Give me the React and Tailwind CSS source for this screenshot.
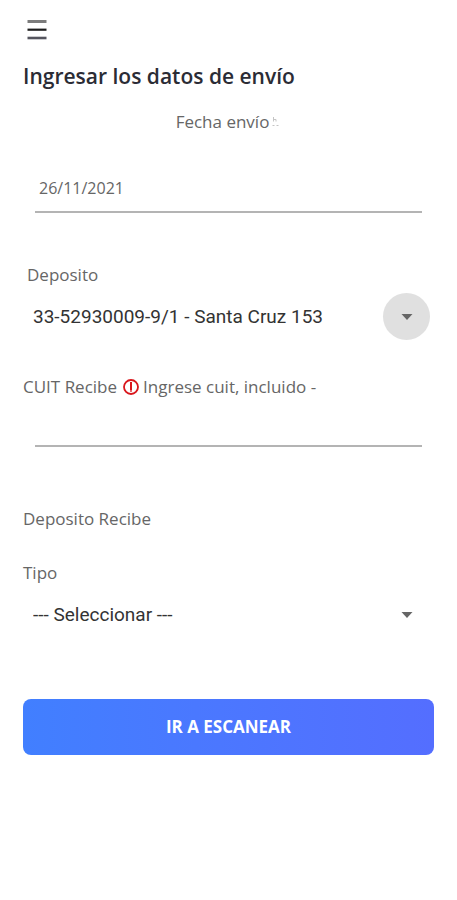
import { useState } from "react";

function Flecha() {
  return (
    <svg viewBox="0 0 12 6" className="h-[6px] w-[12px] fill-[#666666]" aria-hidden="true">
      <path d="M0.5 0h11L6 6z" />
    </svg>
  );
}

function Selector({ id, value, onChange, opciones, activo }) {
  return (
    <div className="relative mt-1.5 h-12">
      <select
        id={id}
        name={id}
        value={value}
        onChange={onChange}
        className="h-full w-full appearance-none bg-transparent pl-2.5 pr-14 font-[Roboto,sans-serif] text-[19px] text-[#333333] focus:outline-none"
      >
        {opciones.map((opcion) => (
          <option key={opcion} value={opcion}>
            {opcion}
          </option>
        ))}
      </select>
      <span
        className={
          activo
            ? "pointer-events-none absolute right-1 top-0 flex size-[47px] items-center justify-center rounded-full bg-[#e0e0e0]"
            : "pointer-events-none absolute right-1 top-0 flex size-[47px] items-center justify-center rounded-full"
        }
      >
        <Flecha />
      </span>
    </div>
  );
}

export default function IngresarEnvio() {
  const [formData, setFormData] = useState({
    fecha_envio: "26/11/2021",
    deposito: "33-52930009-9/1 - Santa Cruz 153",
    cuit_recibe: "",
    tipo: "--- Seleccionar ---",
  });

  const handleChange = (e) => {
    setFormData({ ...formData, [e.target.name]: e.target.value });
  };

  const handleSubmit = (e) => {
    e.preventDefault();
  };

  return (
    <div className="min-h-screen bg-white px-[23px] pt-4 font-['Open_Sans',sans-serif] text-[17px] text-[#666666]">
      <button type="button" aria-label="Menú" className="flex h-7 w-7 items-center justify-center">
        <svg viewBox="0 0 20 20" className="size-5" aria-hidden="true">
          <path d="M0.500 1.500h19" stroke="#7c7c7c" strokeWidth="3" />
          <path d="M0.500 9.700h19" stroke="#1c1c1c" strokeWidth="2.200" />
          <path d="M0.500 18h19" stroke="#55555e" strokeWidth="2.600" />
        </svg>
      </button>

      <h1 className="mt-4 text-[21px] leading-8 font-semibold text-[#2b2c35]">
        Ingresar los datos de envío
      </h1>

      <form onSubmit={handleSubmit}>
        <label htmlFor="fecha_envio" className="mt-[18px] flex h-6 items-center justify-center">
          Fecha envío
          <svg viewBox="0 0 10 12" className="ml-0.5 h-3 w-2.5" fill="none" stroke="#c4c4c4" aria-hidden="true">
            <path d="M2.500 1v4.500M2.500 3.500h2.500v2M1.500 9.500h2M5.500 9.500h2" />
          </svg>
        </label>
        <div className="mx-3 mt-[31px]">
          <input
            type="text"
            id="fecha_envio"
            name="fecha_envio"
            value={formData.fecha_envio}
            onChange={handleChange}
            className="h-12 w-full border-b-2 border-[#b4b4b4] px-1 text-base focus:outline-none"
          />
        </div>

        <label htmlFor="deposito" className="mt-[50px] ml-1 block h-6 leading-6">
          Deposito
        </label>
        <Selector
          id="deposito"
          value={formData.deposito}
          onChange={handleChange}
          opciones={["33-52930009-9/1 - Santa Cruz 153"]}
          activo
        />

        <label htmlFor="cuit_recibe" className="mt-[34px] flex h-6 items-center">
          CUIT Recibe
          <svg viewBox="0 0 16 16" className="mr-1 ml-1.5 size-4" fill="none" stroke="#d9161c" aria-hidden="true">
            <circle cx="8" cy="8" r="7" strokeWidth="1.800" />
            <path d="M8 3v8.500" strokeWidth="2" />
            <path d="M8 11.500v1.500" strokeWidth="2" strokeOpacity="0.6" />
          </svg>
          Ingrese cuit, incluido -
        </label>
        <div className="mx-3">
          <input
            type="text"
            id="cuit_recibe"
            name="cuit_recibe"
            value={formData.cuit_recibe}
            onChange={handleChange}
            className="h-12 w-full border-b-2 border-[#b4b4b4] px-1 text-base focus:outline-none"
          />
        </div>

        <p className="mt-15 h-6 leading-6">Deposito Recibe</p>

        <label htmlFor="tipo" className="mt-[30px] block h-6 leading-6">
          Tipo
        </label>
        <Selector
          id="tipo"
          value={formData.tipo}
          onChange={handleChange}
          opciones={["--- Seleccionar ---"]}
        />

        <button
          type="submit"
          className="mt-15 h-14 w-full rounded-lg bg-linear-to-r from-[#417fff] to-[#546eff] font-bold text-white"
        >
          IR A ESCANEAR
        </button>
      </form>
    </div>
  );
}
